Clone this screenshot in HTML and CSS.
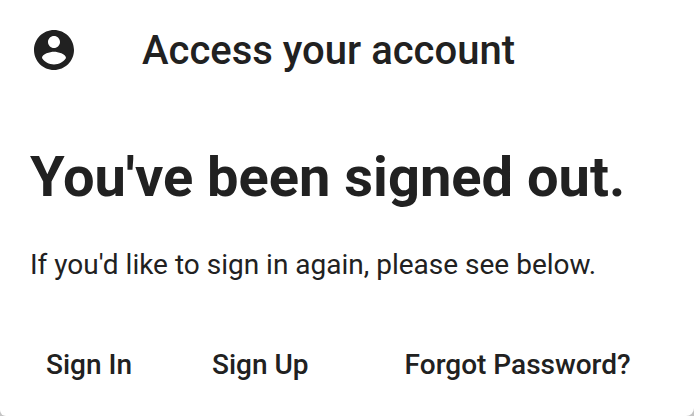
FILE: index.html
```html
<!DOCTYPE html>
<html lang="en">
<head>
<meta charset="utf-8">
<title>Access your account</title>
<link rel="stylesheet" href="styles.css">
</head>
<body>
<main class="card">
  <header class="toolbar">
    <svg class="icon" viewBox="0 0 24 24" aria-hidden="true"><path d="M12 2C6.480 2 2 6.480 2 12s4.480 10 10 10 10-4.480 10-10S17.520 2 12 2zm0 3c1.660 0 3 1.340 3 3s-1.340 3-3 3-3-1.340-3-3 1.340-3 3-3zm0 14.200c-2.500 0-4.710-1.280-6-3.220.03-1.990 4-3.080 6-3.080 1.990 0 5.970 1.090 6 3.080-1.290 1.940-3.500 3.220-6 3.220z"/></svg>
    <h2 class="title">Access your account</h2>
  </header>
  <section class="content">
    <h1 class="headline">You've been signed out.</h1>
    <p class="message">If you'd like to sign in again, please see below.</p>
  </section>
  <nav class="actions">
    <button class="action" type="button">Sign In</button>
    <button class="action" type="button">Sign Up</button>
    <button class="action action-recover" type="button">Forgot Password?</button>
  </nav>
</main>
</body>
</html>
```
FILE: styles.css
```css
body {
  margin: 0;
  background: #c4c4c4;
  color: #212121;
  font-family: Roboto, sans-serif;
}

.card {
  box-sizing: border-box;
  min-height: 100vh;
  background: #fff;
  border-radius: 0 0 8px 6px;
}

.toolbar {
  display: flex;
  align-items: center;
  gap: 64px;
  height: 100px;
  padding: 0 30px;
}

.icon {
  width: 48px;
  height: 48px;
  fill: currentColor;
}

.title {
  margin: 0;
  font-size: 40px;
  font-weight: 500;
}

.content {
  padding: 45px 30px 0;
}

.headline {
  margin: 0;
  font-size: 56px;
  line-height: 64px;
  font-weight: 700;
}

.message {
  margin: 40px 0 0;
  font-size: 28px;
  line-height: 32px;
}

.actions {
  display: flex;
  gap: 48px;
  padding: 50px 30px 15px;
}

.action {
  padding: 16px;
  border: 0;
  background: none;
  color: inherit;
  font: 500 28px/36px Roboto, sans-serif;
}

.action-recover {
  margin-left: 16px;
}
```
